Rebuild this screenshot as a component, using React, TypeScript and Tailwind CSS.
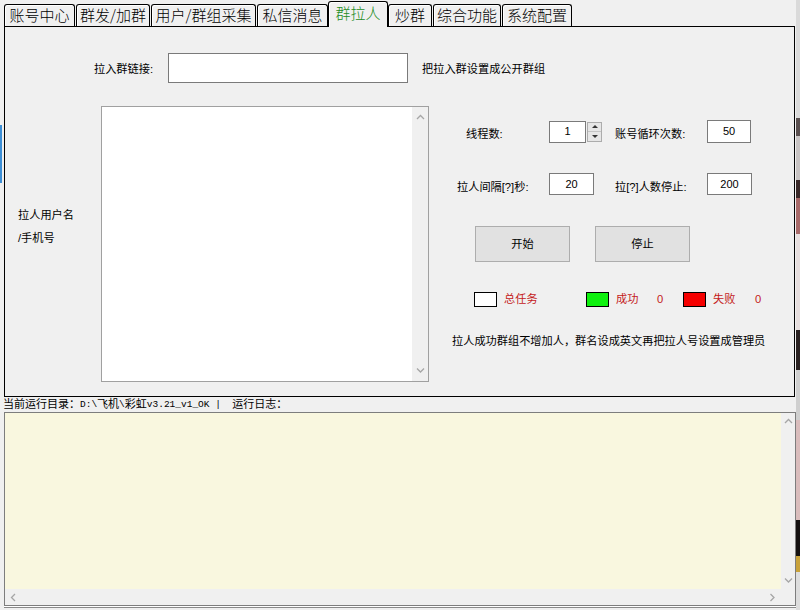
import type { ReactNode } from 'react'

const FONT = { fontFamily: '"Liberation Sans", "Noto Sans CJK SC", sans-serif' }
const MONO = { fontFamily: '"Liberation Mono", "Noto Sans CJK SC", monospace' }
const CJK = { fontFamily: '"Noto Sans CJK SC", sans-serif' }

const tabs = [
  { label: '账号中心', cls: 'ml-[1px] w-[71px]' },
  { label: '群发/加群', cls: 'ml-[1px] w-[74px]' },
  { label: '用户/群组采集', cls: 'ml-[1px] w-[105px]' },
  { label: '私信消息', cls: 'ml-[1px] w-[71px]' },
  { label: '群拉人', cls: 'w-[60px]', active: true },
  { label: '炒群', cls: 'w-[44px]' },
  { label: '综合功能', cls: 'ml-[1px] w-[68px]' },
  { label: '系统配置', cls: 'ml-[1px] w-[70px]' },
]

function Chevron({ dir }: { dir: 'up' | 'down' | 'left' | 'right' }) {
  const pts = {
    up: '1,5 4.5,1.5 8,5',
    down: '1,1.5 4.5,5 8,1.5',
    left: '5,1 1.5,4.5 5,8',
    right: '1.5,1 5,4.5 1.5,8',
  }[dir]
  const vertical = dir === 'up' || dir === 'down'
  return (
    <svg width={vertical ? 9 : 7} height={vertical ? 7 : 9} viewBox={vertical ? '0 0 9 7' : '0 0 7 9'}>
      <polyline points={pts} fill="none" stroke="#a6a6a6" strokeWidth="1.3" />
    </svg>
  )
}

function Field({ value, cls }: { value: string; cls: string }) {
  return (
    <div className={`flex items-center justify-center border border-[#7a7a7a] bg-white text-[11px] text-black ${cls}`}>
      {value}
    </div>
  )
}

function Swatch({ cls }: { cls: string }) {
  return <div className={`h-[15px] w-[23px] border border-black ${cls}`} />
}

function Label({ children, cls }: { children: ReactNode; cls: string }) {
  return <div className={`pt-[5px] text-[11.2px] leading-[16px] text-black ${cls}`}>{children}</div>
}

function ScrollTrack() {
  return (
    <div className="flex w-[16px] flex-col items-center justify-between bg-[#f0f0f0] py-[7px]">
      <Chevron dir="up" />
      <Chevron dir="down" />
    </div>
  )
}

export default function App() {
  return (
    <div className="flex h-[610px] w-[800px] overflow-hidden bg-[#f0f0f0]" style={FONT}>
      {/* desktop showing through on the left */}
      <div className="flex w-[3px] flex-col">
        <div className="h-[125px]" />
        <div className="h-[58px] w-[2px] bg-[#3d8fd6]" />
      </div>

      <div className="flex w-[793px] flex-col">
        {/* tab strip */}
        <div className="flex h-[26px] items-end">
          {tabs.map((t) =>
            t.active ? (
              <div
                key={t.label}
                className={`relative z-10 -mb-px flex h-[26px] items-center justify-center rounded-t-[3px] border border-b-0 border-black bg-[#f0f0f0] pb-[2px] text-[15px] font-light text-[#1c8c1c] shadow-[inset_1px_1px_0_#fff] ${t.cls}`}
                style={CJK}
              >
                {t.label}
              </div>
            ) : (
              <div
                key={t.label}
                className={`flex h-[22px] items-center justify-center rounded-t-[3px] border border-b-0 border-black text-[15px] font-light text-black shadow-[inset_1px_1px_0_#fff] ${t.cls}`}
                style={CJK}
              >
                {t.label}
              </div>
            ),
          )}
        </div>

        {/* tab page */}
        <div className="ml-[1px] h-[371px] w-[791px] border border-black bg-[#f0f0f0]">
          <div className="mt-[26px] flex h-[30px] items-center">
            <div className="w-[163px] pr-[15px] pt-[2px] text-right text-[11.2px] text-black">拉入群链接:</div>
            <div className="h-[30px] w-[240px] border border-[#7a7a7a] bg-white" />
            <div className="ml-[14px] pt-[2px] text-[11.2px] text-black">把拉入群设置成公开群组</div>
          </div>

          <div className="mt-[23px] flex">
            <div className="w-[96px] pl-[13px] pt-[98px] text-[11.2px] leading-[23px] text-black">
              <div>拉人用户名</div>
              <div>/手机号</div>
            </div>

            <div className="flex h-[276px] w-[328px] border border-[#a0a0a0] bg-white">
              <div className="flex-1" />
              <ScrollTrack />
            </div>

            <div className="flex flex-1 flex-col">
              <div className="mt-[14px] flex h-[23px] items-center">
                <Label cls="w-[120px] pl-[37px]">线程数:</Label>
                <Field value="1" cls="h-[22px] w-[37px]" />
                <div className="ml-[1px] flex h-[20px] w-[15px] flex-col border border-[#acacac] bg-[#e6e6e6]">
                  <div className="flex flex-1 items-center justify-center border-b border-[#c4c4c4]">
                    <div className="h-0 w-0 border-x-[3px] border-b-[3px] border-x-transparent border-b-[#333]" />
                  </div>
                  <div className="flex flex-1 items-center justify-center">
                    <div className="h-0 w-0 border-x-[3px] border-t-[3px] border-x-transparent border-t-[#333]" />
                  </div>
                </div>
                <Label cls="w-[105px] pl-[13px]">账号循环次数:</Label>
                <Field value="50" cls="h-[23px] w-[44px]" />
              </div>

              <div className="mt-[30px] flex h-[22px] items-center">
                <Label cls="w-[120px] pl-[28px]">拉人间隔[?]秒:</Label>
                <Field value="20" cls="h-[22px] w-[45px]" />
                <Label cls="w-[113px] pl-[21px]">拉[?]人数停止:</Label>
                <Field value="200" cls="h-[22px] w-[45px]" />
              </div>

              <div className="mt-[31px] flex">
                <button
                  type="button"
                  className="ml-[46px] h-[36px] w-[95px] border border-[#adadad] bg-[#e1e1e1] text-[11.2px] text-black"
                >
                  开始
                </button>
                <button
                  type="button"
                  className="ml-[25px] h-[36px] w-[95px] border border-[#adadad] bg-[#e1e1e1] text-[11.2px] text-black"
                >
                  停止
                </button>
              </div>

              <div className="mt-[30px] flex h-[15px] items-center text-[11.2px] leading-[15px] text-[#c41a1a]">
                <div className="ml-[45px]">
                  <Swatch cls="bg-white" />
                </div>
                <div className="w-[89px] pl-[7px]">总任务</div>
                <Swatch cls="bg-[#0ef00e]" />
                <div className="w-[48px] pl-[7px]">成功</div>
                <div className="w-[26px]">0</div>
                <Swatch cls="bg-[#f50000]" />
                <div className="w-[49px] pl-[7px]">失败</div>
                <div>0</div>
              </div>

              <div className="mt-[26px] pl-[23px] text-[11.2px] leading-[16px] text-black">
                拉人成功群组不增加人，群名设成英文再把拉人号设置成管理员
              </div>
            </div>
          </div>
        </div>

        {/* status line */}
        <div className="flex h-[15px] items-center whitespace-pre text-[11px] leading-[15px] text-black" style={MONO}>
          <span style={FONT}>当前运行目录：</span>
          <span className="text-[9.5px]">D:\</span>
          <span style={FONT}>飞机</span>
          <span className="text-[9.5px]">\</span>
          <span style={FONT}>彩虹</span>
          <span className="text-[9.5px]">v3.21_v1_OK |  </span>
          <span style={FONT}>运行日志：</span>
        </div>

        {/* log box */}
        <div className="ml-[1px] flex h-[194px] w-[792px] flex-col border border-[#7d7d7d] shadow-[0_1px_0_#fff,0_2px_0_#8a8a8a]">
          <div className="flex h-[176px]">
            <div className="flex-1 bg-[#f9f7df]" />
            <div className="flex w-[14px] flex-col items-center justify-between bg-[#f0f0f0] py-[5px]">
              <Chevron dir="up" />
              <Chevron dir="down" />
            </div>
          </div>
          <div className="flex h-[16px]">
            <div className="flex flex-1 items-center justify-between bg-[#f0f0f0] px-[5px]">
              <Chevron dir="left" />
              <Chevron dir="right" />
            </div>
            <div className="w-[14px] bg-[#f0f0f0]" />
          </div>
        </div>
      </div>

      {/* desktop showing through on the right */}
      <div className="flex w-[4px] flex-col">
        <div className="h-[118px] bg-[#dadada]" />
        <div className="h-[18px] bg-[#5a5050]" />
        <div className="h-[44px] bg-[#c8c4c4]" />
        <div className="h-[18px] bg-[#3a2a2a]" />
        <div className="h-[36px] bg-[#a86a6a]" />
        <div className="h-[96px] bg-[#e6dede]" />
        <div className="h-[40px] bg-[#2a2222]" />
        <div className="h-[50px] bg-[#cfcfcf]" />
        <div className="h-[100px] bg-[#d9bcbc]" />
        <div className="h-[36px] bg-[#141010]" />
        <div className="h-[16px] bg-[#c9a23a]" />
        <div className="h-[38px] bg-[#dddddd]" />
      </div>
    </div>
  )
}
